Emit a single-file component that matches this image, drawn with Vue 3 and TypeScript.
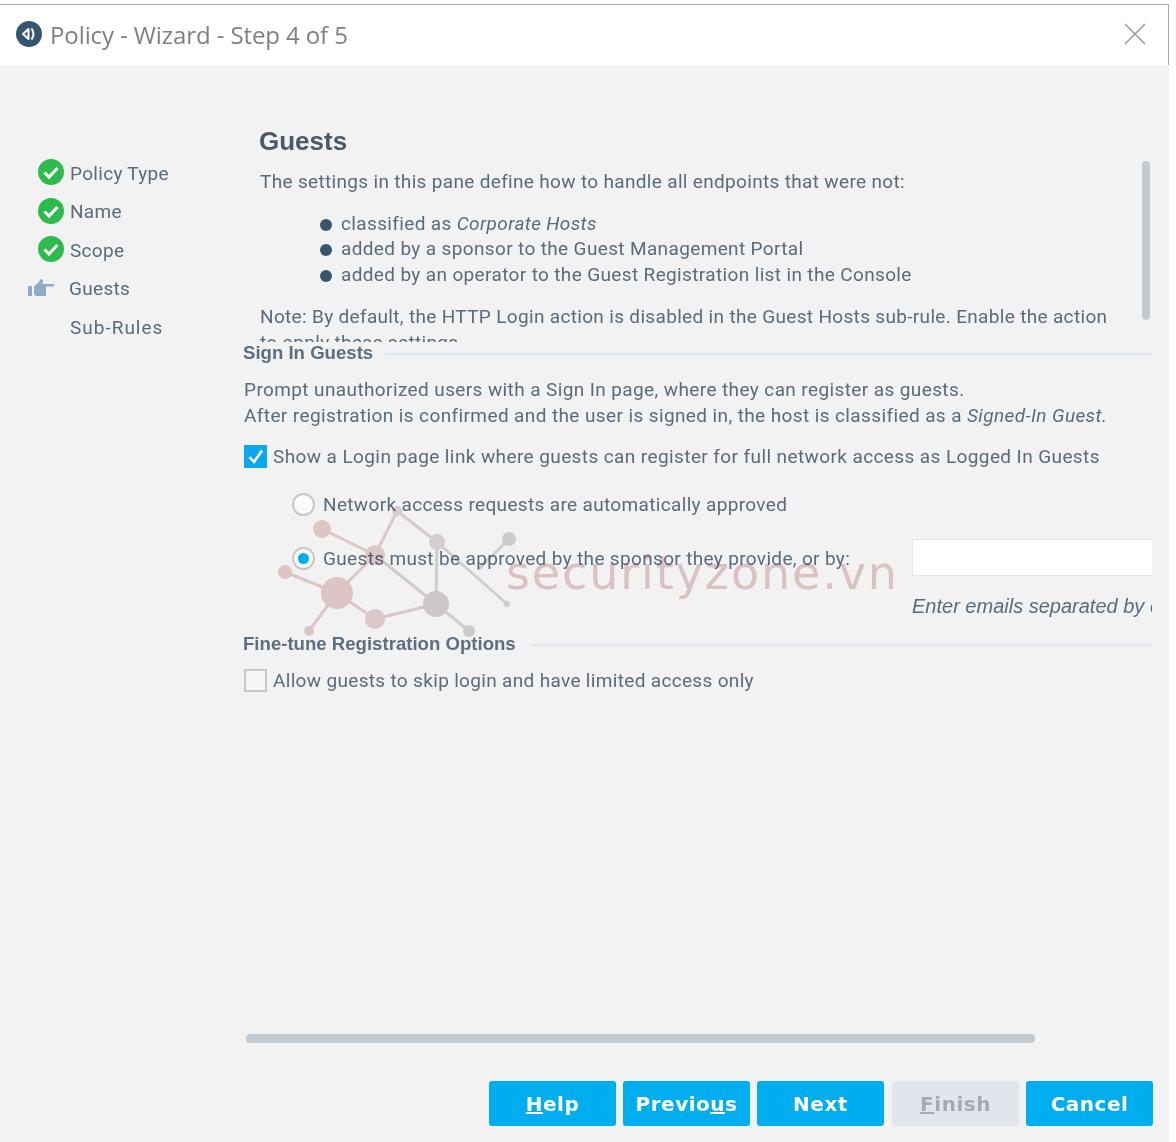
<script setup lang="ts">
const steps = [
  { label: 'Policy Type', state: 'done' },
  { label: 'Name', state: 'done' },
  { label: 'Scope', state: 'done' },
  { label: 'Guests', state: 'current' },
  { label: 'Sub-Rules', state: 'todo' },
]

// watermark graph: pink on the left, grey on the right
const links = [
  [322, 529, 375, 555, '#e3c6c6'], [375, 555, 397, 511, '#e0c8c8'], [397, 511, 437, 542, '#dccaca'],
  [375, 555, 436, 604, '#d8caca'], [337, 593, 375, 555, '#e3c6c6'], [285, 572, 337, 593, '#e3c6c6'],
  [337, 593, 309, 631, '#e3c6c6'], [337, 593, 375, 619, '#e3c6c6'], [375, 619, 436, 604, '#d8c8c8'],
  [437, 542, 436, 604, '#d0d0d0'], [437, 542, 507, 604, '#d0d0d0'], [478, 570, 509, 539, '#d0d0d0'],
  [436, 604, 469, 631, '#d0d0d0'],
]
const nodes = [
  [322, 529, 9, '#e5c4c4'], [375, 555, 10, '#e3c8c8'], [397, 511, 5, '#e0cccc'], [437, 542, 8, '#d8d0d0'],
  [285, 572, 7, '#e5c4c4'], [337, 593, 16, '#e5c4c4'], [309, 631, 5, '#e5c4c4'], [375, 619, 10, '#e0c8c8'],
  [436, 604, 13, '#cfc6c6'], [469, 631, 6, '#cdcdcd'], [509, 539, 7, '#cdcdcd'], [507, 604, 3, '#cdcdcd'],
]
</script>

<template>
  <div class="window">
    <header class="titlebar">
      <svg class="logo" width="26" height="26" viewBox="0 0 26 26">
        <circle cx="13" cy="13" r="13" fill="#36556e" />
        <path d="M12.5 8 L7 13 L12.5 18 Z" fill="none" stroke="#fff" stroke-width="2" stroke-linejoin="round" />
        <path d="M15.5 7.5 Q19.5 13 15.5 18.5" fill="none" stroke="#fff" stroke-width="2" />
      </svg>
      <span class="title">Policy - Wizard - Step 4 of 5</span>
      <svg class="close" width="22" height="22" viewBox="0 0 22 22">
        <path d="M1 1 L21 21 M21 1 L1 21" stroke="#9a9a9a" stroke-width="1.5" />
      </svg>
    </header>

    <div class="body">
      <div class="wizard">
        <ul class="steps">
          <li v-for="s in steps" :key="s.label" class="step" :class="s.state">
            <svg v-if="s.state === 'done'" class="step-icon" width="26" height="26" viewBox="0 0 26 26">
              <circle cx="13" cy="13" r="13" fill="#2dbb4e" />
              <path d="M6.5 13.5 L11 18 L19.5 9" fill="none" stroke="#fff" stroke-width="3" />
            </svg>
            <svg v-else-if="s.state === 'current'" class="thumb" width="26" height="18" viewBox="0 0 26 18">
              <path d="M0 7 H4 V17 H0 Z M6 7.5 L11 3 L12.5 0 L15 1 L14.5 5 H26 V7.5 H18 V17 H8 L6 15.5 Z" fill="#8eabc8" />
            </svg>
            <span>{{ s.label }}</span>
          </li>
        </ul>

        <div class="content">
          <div class="intro">
            <h2>Guests</h2>
            <p class="lead">The settings in this pane define how to handle all endpoints that were not:</p>
            <ul class="bullets">
              <li>classified as <em>Corporate Hosts</em></li>
              <li>added by a sponsor to the Guest Management Portal</li>
              <li>added by an operator to the Guest Registration list in the Console</li>
            </ul>
            <p class="note">Note: By default, the HTTP Login action is disabled in the Guest Hosts sub-rule. Enable the action</p>
            <p class="note-cont">to apply these settings.</p>
            <div class="vthumb"></div>
          </div>

          <div class="section-head first">
            <span>Sign In Guests</span><i></i>
          </div>
          <p class="desc d1">Prompt unauthorized users with a Sign In page, where they can register as guests.</p>
          <p class="desc">After registration is confirmed and the user is signed in, the host is classified as a <em>Signed-In Guest.</em></p>

          <label class="check-row c1">
            <span class="box on">
              <svg width="23" height="23" viewBox="0 0 23 23">
                <path d="M5.5 12 L10 17 L18 5.5" fill="none" stroke="#fff" stroke-width="2.6" />
              </svg>
            </span>
            Show a Login page link where guests can register for full network access as Logged In Guests
          </label>

          <div class="radio-row r1">
            <span class="radio"></span>
            Network access requests are automatically approved
          </div>
          <div class="radio-row r2">
            <span class="radio"><b></b></span>
            <span class="radio-label">Guests must be approved by the sponsor they provide, or by:</span>
            <span class="field"></span>
          </div>
          <div class="hint"><em>Enter emails separated by commas</em></div>

          <div class="section-head second">
            <span>Fine-tune Registration Options</span><i></i>
          </div>
          <label class="check-row c2">
            <span class="box"></span>
            Allow guests to skip login and have limited access only
          </label>

          <div class="hbar"><div class="hthumb"></div></div>

          <footer class="actions">
            <button type="button"><u>H</u>elp</button>
            <button type="button">Previo<u>u</u>s</button>
            <button type="button">Next</button>
            <button type="button" disabled><u>F</u>inish</button>
            <button type="button">Cancel</button>
          </footer>
        </div>
      </div>
    </div>

    <svg class="watermark" width="660" height="160" viewBox="270 495 660 160">
      <line v-for="(l, i) in links" :key="i" :x1="l[0]" :y1="l[1]" :x2="l[2]" :y2="l[3]" :stroke="(l[4] as string)" stroke-width="3" />
      <circle v-for="(n, i) in nodes" :key="'n' + i" :cx="n[0]" :cy="n[1]" :r="n[2]" :fill="(n[3] as string)" />
      <text x="506" y="589" class="wm-text">securityzone.vn</text>
    </svg>
  </div>
</template>

<style>
html, body {
  margin: 0;
  background: #fff;
}
</style>

<style scoped>
.window {
  position: relative;
  width: 1169px;
  height: 1142px;
  font-family: Roboto, "Liberation Sans", sans-serif;
  font-size: 19px;
  color: #5a6b7c;
  overflow: hidden;
}

.titlebar {
  display: flex;
  align-items: center;
  box-sizing: border-box;
  height: 61px;
  margin-top: 4px;
  padding: 0 22px 3px 16px;
  border-top: 1px solid #a9a9a9;
  border-right: 1px solid #a9a9a9;
  background: #fff;
}

.logo {
  margin-right: 8px;
}

.title {
  flex: 1;
  padding-top: 2px;
  font-family: "Open Sans", sans-serif;
  font-size: 24px;
  letter-spacing: -0.1px;
  color: #7b8187;
}

.body {
  height: 1077px;
  background: #f2f2f2;
}

.wizard {
  display: flex;
}

.steps {
  width: 244px;
  flex: none;
  margin: 0;
  padding: 88px 0 0 38px;
  box-sizing: border-box;
  list-style: none;
}

.step {
  display: flex;
  align-items: center;
  gap: 6px;
  height: 38.5px;
  font-size: 19px;
  letter-spacing: 0.3px;
}

.step span {
  padding-top: 2px;
}

.step.current {
  margin-left: -10px;
  gap: 15px;
}

.step.todo {
  padding-left: 32px;
  letter-spacing: 1px;
}

.content {
  flex: 1;
  padding-right: 17px;
  min-width: 0;
}

.intro {
  position: relative;
  height: 277px;
  margin-bottom: -1px;
  padding: 60px 0 0 16px;
  box-sizing: border-box;
  overflow: hidden;
}

h2 {
  margin: 0 0 0 -1px;
  height: 33px;
  line-height: 33px;
  font-family: "Liberation Sans", sans-serif;
  font-size: 26px;
  font-weight: 700;
  color: #4a5a6a;
}

.lead, .note, .note-cont, .desc {
  margin: 0;
  height: 25.5px;
  line-height: 25.5px;
  white-space: nowrap;
  letter-spacing: 0.33px;
}

.lead {
  margin-top: 11px;
}

.bullets {
  margin: 16px 0 17px;
  padding: 0 0 0 81px;
  list-style: none;
}

.bullets li {
  position: relative;
  height: 25.5px;
  line-height: 25.5px;
  letter-spacing: 0.36px;
}

.bullets li::before {
  content: "";
  position: absolute;
  left: -21px;
  top: 8px;
  width: 12px;
  height: 12px;
  border-radius: 50%;
  background: #36556e;
}

.vthumb {
  position: absolute;
  right: 2px;
  top: 96px;
  width: 8px;
  height: 159px;
  border-radius: 4px;
  background: #c3cbd0;
}

.section-head {
  display: flex;
  align-items: center;
  height: 24px;
  margin-left: -1px;
  font-family: "Liberation Sans", sans-serif;
  font-size: 18.6px;
  font-weight: 700;
  color: #5d6f80;
  white-space: nowrap;
}

.section-head i {
  flex: 1;
  height: 2px;
  margin: 2px 0 0 12px;
  background: #dfe8f1;
}

.section-head.second i {
  margin-left: 14px;
}

.desc.d1 {
  margin-top: 12px;
}

.desc {
  letter-spacing: 0.39px;
}

.check-row {
  display: flex;
  align-items: center;
  gap: 6px;
  height: 24px;
  white-space: nowrap;
  letter-spacing: 0.33px;
}

.c1 {
  margin-top: 16px;
  letter-spacing: 0.4px;
}

.c2 {
  margin-top: 12px;
}

.box {
  box-sizing: border-box;
  width: 23px;
  height: 23px;
  flex: none;
  border: 2px solid #c8c8c8;
  background: #f6f6f6;
}

.box.on {
  border: 0;
  background: #0aa9ef;
}

.radio-row {
  display: flex;
  align-items: center;
  gap: 8px;
  padding-left: 48px;
  white-space: nowrap;
  letter-spacing: 0.34px;
}

.r1 {
  height: 24px;
  margin-top: 24px;
}

.r2 {
  height: 38px;
  margin-top: 23px;
}

.radio {
  box-sizing: border-box;
  display: flex;
  align-items: center;
  justify-content: center;
  width: 23px;
  height: 23px;
  flex: none;
  border: 2px solid #c8c8c8;
  border-radius: 50%;
  background: #fafafa;
}

.radio b {
  width: 11px;
  height: 11px;
  border-radius: 50%;
  background: #00aeef;
}

.radio-label {
  width: 581px;
  flex: none;
}

.field {
  box-sizing: border-box;
  flex: 1;
  height: 37px;
  margin-bottom: 2px;
  border: 1px solid #e8e8e8;
  border-right: 0;
  background: #fff;
}

.hint {
  height: 24px;
  margin: 18px 0 0 668px;
  font-family: "Liberation Sans", sans-serif;
  font-size: 20px;
  overflow: hidden;
  white-space: nowrap;
}

.section-head.second {
  margin-top: 13px;
}

.hbar {
  height: 9px;
  margin: 342px 0 0 2px;
}

.hthumb {
  width: 789px;
  height: 9px;
  border-radius: 4px;
  background: #c3cbd0;
}

.actions {
  display: flex;
  justify-content: flex-end;
  gap: 7px;
  margin: 38px -1px 0 0;
}

.actions button {
  width: 127px;
  height: 45px;
  padding: 0;
  border: 0;
  border-radius: 3px;
  background: #00aeef;
  color: #fff;
  font-family: "DejaVu Sans", sans-serif;
  font-size: 20px;
  font-weight: 700;
  letter-spacing: 0.5px;
}

.actions button:disabled {
  margin-left: 1px;
  background: #e2e6ec;
  color: #a6abb2;
}

.watermark {
  position: absolute;
  left: 270px;
  top: 495px;
  mix-blend-mode: multiply;
  opacity: 0.8;
  pointer-events: none;
}

.wm-text {
  font-family: "DejaVu Sans", sans-serif;
  font-size: 46px;
  fill: #e3c0c0;
  letter-spacing: 1.9px;
}
</style>
